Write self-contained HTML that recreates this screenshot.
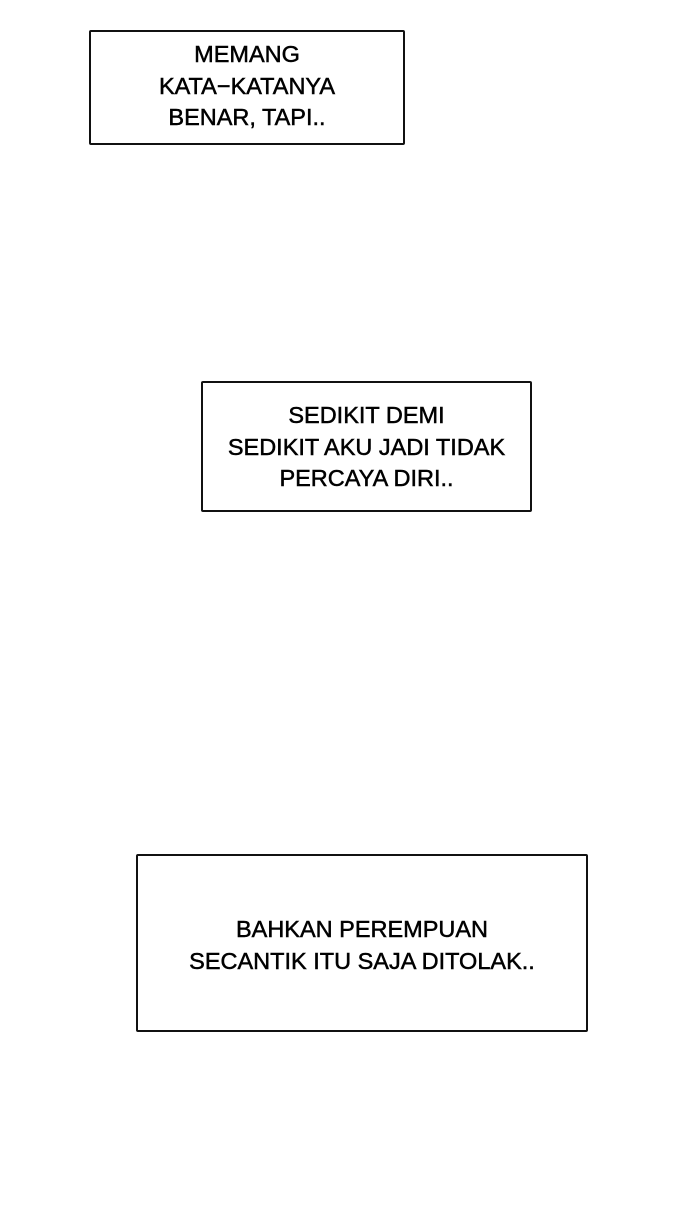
<!DOCTYPE html>
<html><head><style>
html,body{margin:0;padding:0;background:#fff;width:700px;height:1228px;overflow:hidden}
.b{position:absolute;border:2px solid #111;border-radius:2px;box-sizing:border-box;background:#fff}
.t{position:absolute;left:0;right:0;text-align:center;font-family:"Liberation Sans",sans-serif;font-size:23.5px;line-height:31.5px;color:#000;-webkit-text-stroke:0.5px #000}
</style></head><body>
<div class="b" style="left:89px;top:30px;width:316px;height:115px">
<div class="t" style="top:7px">MEMANG<br>KATA−KATANYA<br>BENAR, TAPI..</div></div>
<div class="b" style="left:201px;top:381px;width:331px;height:131px">
<div class="t" style="top:17px">SEDIKIT DEMI<br>SEDIKIT AKU JADI TIDAK<br>PERCAYA DIRI..</div></div>
<div class="b" style="left:136px;top:854px;width:452px;height:178px">
<div class="t" style="top:58px">BAHKAN PEREMPUAN<br>SECANTIK ITU SAJA DITOLAK..</div></div>
</body></html>
